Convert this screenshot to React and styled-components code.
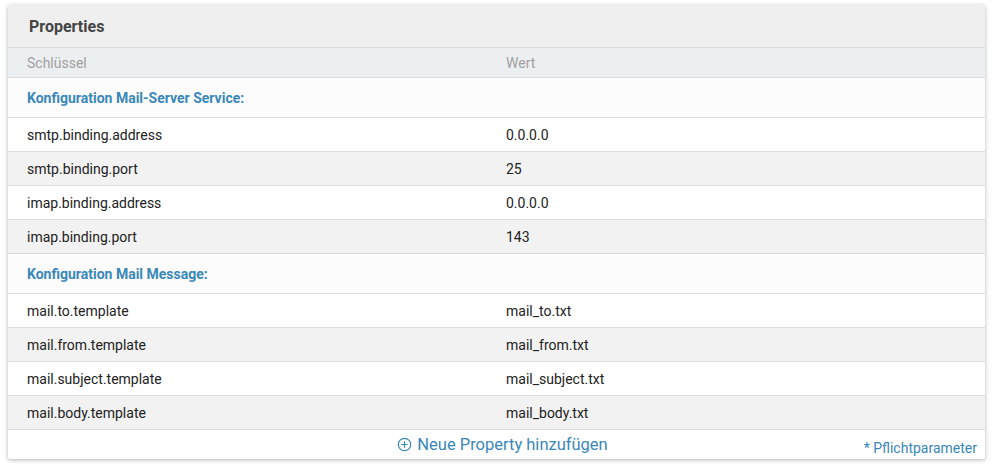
import styled, { createGlobalStyle } from "styled-components";

const GlobalStyle = createGlobalStyle`
  body {
    margin: 0;
    padding: 5px 9px 8px 8px;
    background: #ffffff;
    font-family: Roboto, "Liberation Sans", sans-serif;
  }
`;

const groups = [
  {
    title: "Konfiguration Mail-Server Service:",
    rows: [
      ["smtp.binding.address", "0.0.0.0"],
      ["smtp.binding.port", "25"],
      ["imap.binding.address", "0.0.0.0"],
      ["imap.binding.port", "143"],
    ],
  },
  {
    title: "Konfiguration Mail Message:",
    rows: [
      ["mail.to.template", "mail_to.txt"],
      ["mail.from.template", "mail_from.txt"],
      ["mail.subject.template", "mail_subject.txt"],
      ["mail.body.template", "mail_body.txt"],
    ],
  },
];

function PlusCircle() {
  return (
    <svg width="15" height="15" viewBox="0 0 16 16" fill="none">
      <circle cx="8" cy="8" r="6.6" stroke="currentColor" strokeWidth="1.3" />
      <path d="M8 4.6v6.8M4.6 8h6.8" stroke="currentColor" strokeWidth="1.3" />
    </svg>
  );
}

export default function App() {
  return (
    <>
      <GlobalStyle />
      <Card>
        <CardHeader>Properties</CardHeader>
        <ColumnHeader>
          <Cell>Schlüssel</Cell>
          <Cell>Wert</Cell>
        </ColumnHeader>
        {groups.map((group) => (
          <div key={group.title}>
            <GroupRow>{group.title}</GroupRow>
            {group.rows.map(([key, value], i) => (
              <Row key={key} $striped={i % 2 === 1}>
                <Cell>{key}</Cell>
                <Cell>{value}</Cell>
              </Row>
            ))}
          </div>
        ))}
        <Footer>
          <AddButton>
            <PlusCircle />
            Neue Property hinzufügen
          </AddButton>
          <Required>* Pflichtparameter</Required>
        </Footer>
      </Card>
    </>
  );
}

const Card = styled.div`
  background: #ffffff;
  box-shadow: 0 1px 4px rgba(0, 0, 0, 0.3);
  border-radius: 2px;
  overflow: hidden;
`;

const CardHeader = styled.div`
  height: 42px;
  display: flex;
  align-items: center;
  padding-left: 21px;
  background: #efefef;
  border-bottom: 1px solid #dcdcdc;
  font-size: 16px;
  font-weight: 700;
  color: #444444;
`;

const Cell = styled.div`
  padding-left: 19px;
`;

const ColumnHeader = styled.div`
  display: grid;
  grid-template-columns: 479px 1fr;
  align-items: center;
  height: 29px;
  background: #eceff1;
  border-bottom: 1px solid #dcdcdc;
  font-size: 14px;
  color: #a0a0a0;
`;

const GroupRow = styled.div`
  height: 39px;
  display: flex;
  align-items: center;
  padding-left: 19px;
  background: #fcfcfc;
  border-bottom: 1px solid #dcdcdc;
  font-size: 14px;
  font-weight: 700;
  color: #3a87b9;
`;

const Row = styled.div`
  display: grid;
  grid-template-columns: 479px 1fr;
  align-items: center;
  height: 33px;
  background: ${(p) => (p.$striped ? "#f2f2f2" : "#ffffff")};
  border-bottom: 1px solid #dcdcdc;
  font-size: 14px;
  color: #222222;
`;

const Footer = styled.div`
  position: relative;
  height: 29px;
  display: flex;
  align-items: center;
  justify-content: center;
  padding-left: 12px;
`;

const AddButton = styled.div`
  display: flex;
  align-items: center;
  gap: 5px;
  font-size: 16.5px;
  color: #3a87b9;
  cursor: pointer;
`;

const Required = styled.div`
  position: absolute;
  right: 8px;
  bottom: 3px;
  font-size: 14px;
  color: #3a87b9;
`;
